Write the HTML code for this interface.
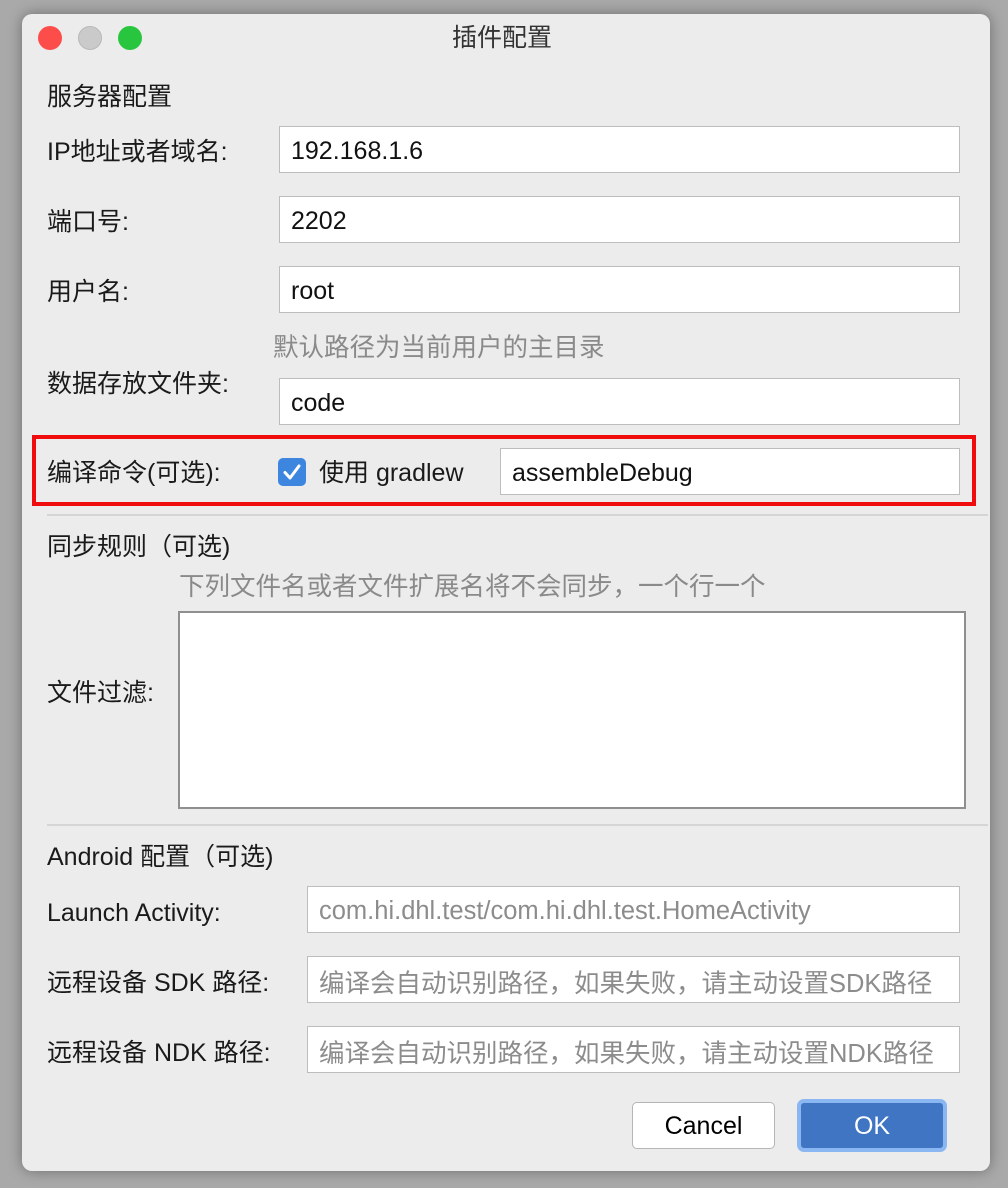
<!DOCTYPE html>
<html><head><meta charset="utf-8"><style>
body{margin:0;width:1008px;height:1188px;background:#a9a9a9;position:relative;overflow:hidden;font-family:"Liberation Sans","Noto Sans CJK SC",sans-serif;}
.win{position:absolute;left:22px;top:14px;width:968px;height:1157px;background:#ececec;border-radius:10px;box-shadow:0 0 14px rgba(0,0,0,.35);}
.a{position:absolute;white-space:nowrap;line-height:30px;}
.t{font-size:25px;color:#1a1a1a;}
.g{font-size:25.5px;color:#8a8a8a;}
.in{position:absolute;background:#fff;border:1px solid #bdbdbd;box-sizing:border-box;font-size:25px;color:#111;padding-left:11px;padding-top:3px;display:flex;align-items:center;white-space:nowrap;overflow:hidden;}
.ph{color:#8c8c8c;font-size:25.5px;}
.dot{position:absolute;top:12px;width:24px;height:24px;border-radius:50%;}
.sep{position:absolute;left:25px;width:941px;height:2px;background:#d5d5d5;}
</style></head><body>
<div class="win">
<div class="dot" style="left:16px;background:#fd4d4a"></div>
<div class="dot" style="left:56px;background:#cacaca;border:1px solid #b8b8b8;box-sizing:border-box"></div>
<div class="dot" style="left:96px;background:#28c63e"></div>
<div class="a t" style="left:430px;top:9px;color:#333">插件配置</div>
<div class="a t" style="left:25px;top:68px">服务器配置</div>
<div class="a t" style="left:25px;top:123px">IP地址或者域名:</div>
<div class="in" style="left:257px;top:112px;width:681px;height:47px">192.168.1.6</div>
<div class="a t" style="left:25px;top:193px">端口号:</div>
<div class="in" style="left:257px;top:182px;width:681px;height:47px">2202</div>
<div class="a t" style="left:25px;top:263px">用户名:</div>
<div class="in" style="left:257px;top:252px;width:681px;height:47px">root</div>
<div class="a g" style="left:251px;top:319px">默认路径为当前用户的主目录</div>
<div class="a t" style="left:25px;top:355px">数据存放文件夹:</div>
<div class="in" style="left:257px;top:364px;width:681px;height:47px">code</div>
<div style="position:absolute;left:10px;top:421px;width:944px;height:71px;border:4px solid #f00c0c;box-sizing:border-box"></div>
<div class="a t" style="left:25px;top:444px">编译命令(可选):</div>
<div style="position:absolute;left:256px;top:444px;width:28px;height:28px;background:#3d86e0;border-radius:5px"><svg width="28" height="28"><path d="M7 14.5 L12 20 L21 8" fill="none" stroke="#fff" stroke-width="3" stroke-linecap="round" stroke-linejoin="round"/></svg></div>
<div class="a t" style="left:297px;top:444px">使用 gradlew</div>
<div class="in" style="left:478px;top:434px;width:460px;height:47px">assembleDebug</div>
<div class="sep" style="top:500px"></div>
<div class="a t" style="left:25px;top:518px">同步规则（可选)</div>
<div class="a g" style="left:157px;top:558px">下列文件名或者文件扩展名将不会同步，一个行一个</div>
<div class="a t" style="left:25px;top:664px">文件过滤:</div>
<div style="position:absolute;left:156px;top:597px;width:788px;height:198px;background:#fff;border:2px solid #8f8f8f;box-sizing:border-box"></div>
<div class="sep" style="top:810px"></div>
<div class="a t" style="left:25px;top:828px">Android 配置（可选)</div>
<div class="a t" style="left:25px;top:884px">Launch Activity:</div>
<div class="in ph" style="left:285px;top:872px;width:653px;height:47px">com.hi.dhl.test/com.hi.dhl.test.HomeActivity</div>
<div class="a t" style="left:25px;top:954px">远程设备 SDK 路径:</div>
<div class="in ph" style="left:285px;top:942px;width:653px;height:47px">编译会自动识别路径，如果失败，请主动设置SDK路径</div>
<div class="a t" style="left:25px;top:1024px">远程设备 NDK 路径:</div>
<div class="in ph" style="left:285px;top:1012px;width:653px;height:47px">编译会自动识别路径，如果失败，请主动设置NDK路径</div>
<div style="position:absolute;left:610px;top:1088px;width:143px;height:47px;background:#fff;border:1px solid #b5b5b5;border-radius:5px;box-sizing:border-box;font-size:25px;text-align:center;line-height:47px">Cancel</div>
<div style="position:absolute;left:775px;top:1085px;width:150px;height:53px;background:#3f75c3;border:4px solid #8ab7f2;border-radius:7px;box-sizing:border-box;font-size:25px;color:#fff;text-align:center;line-height:47px">OK</div>
</div>
</body></html>
